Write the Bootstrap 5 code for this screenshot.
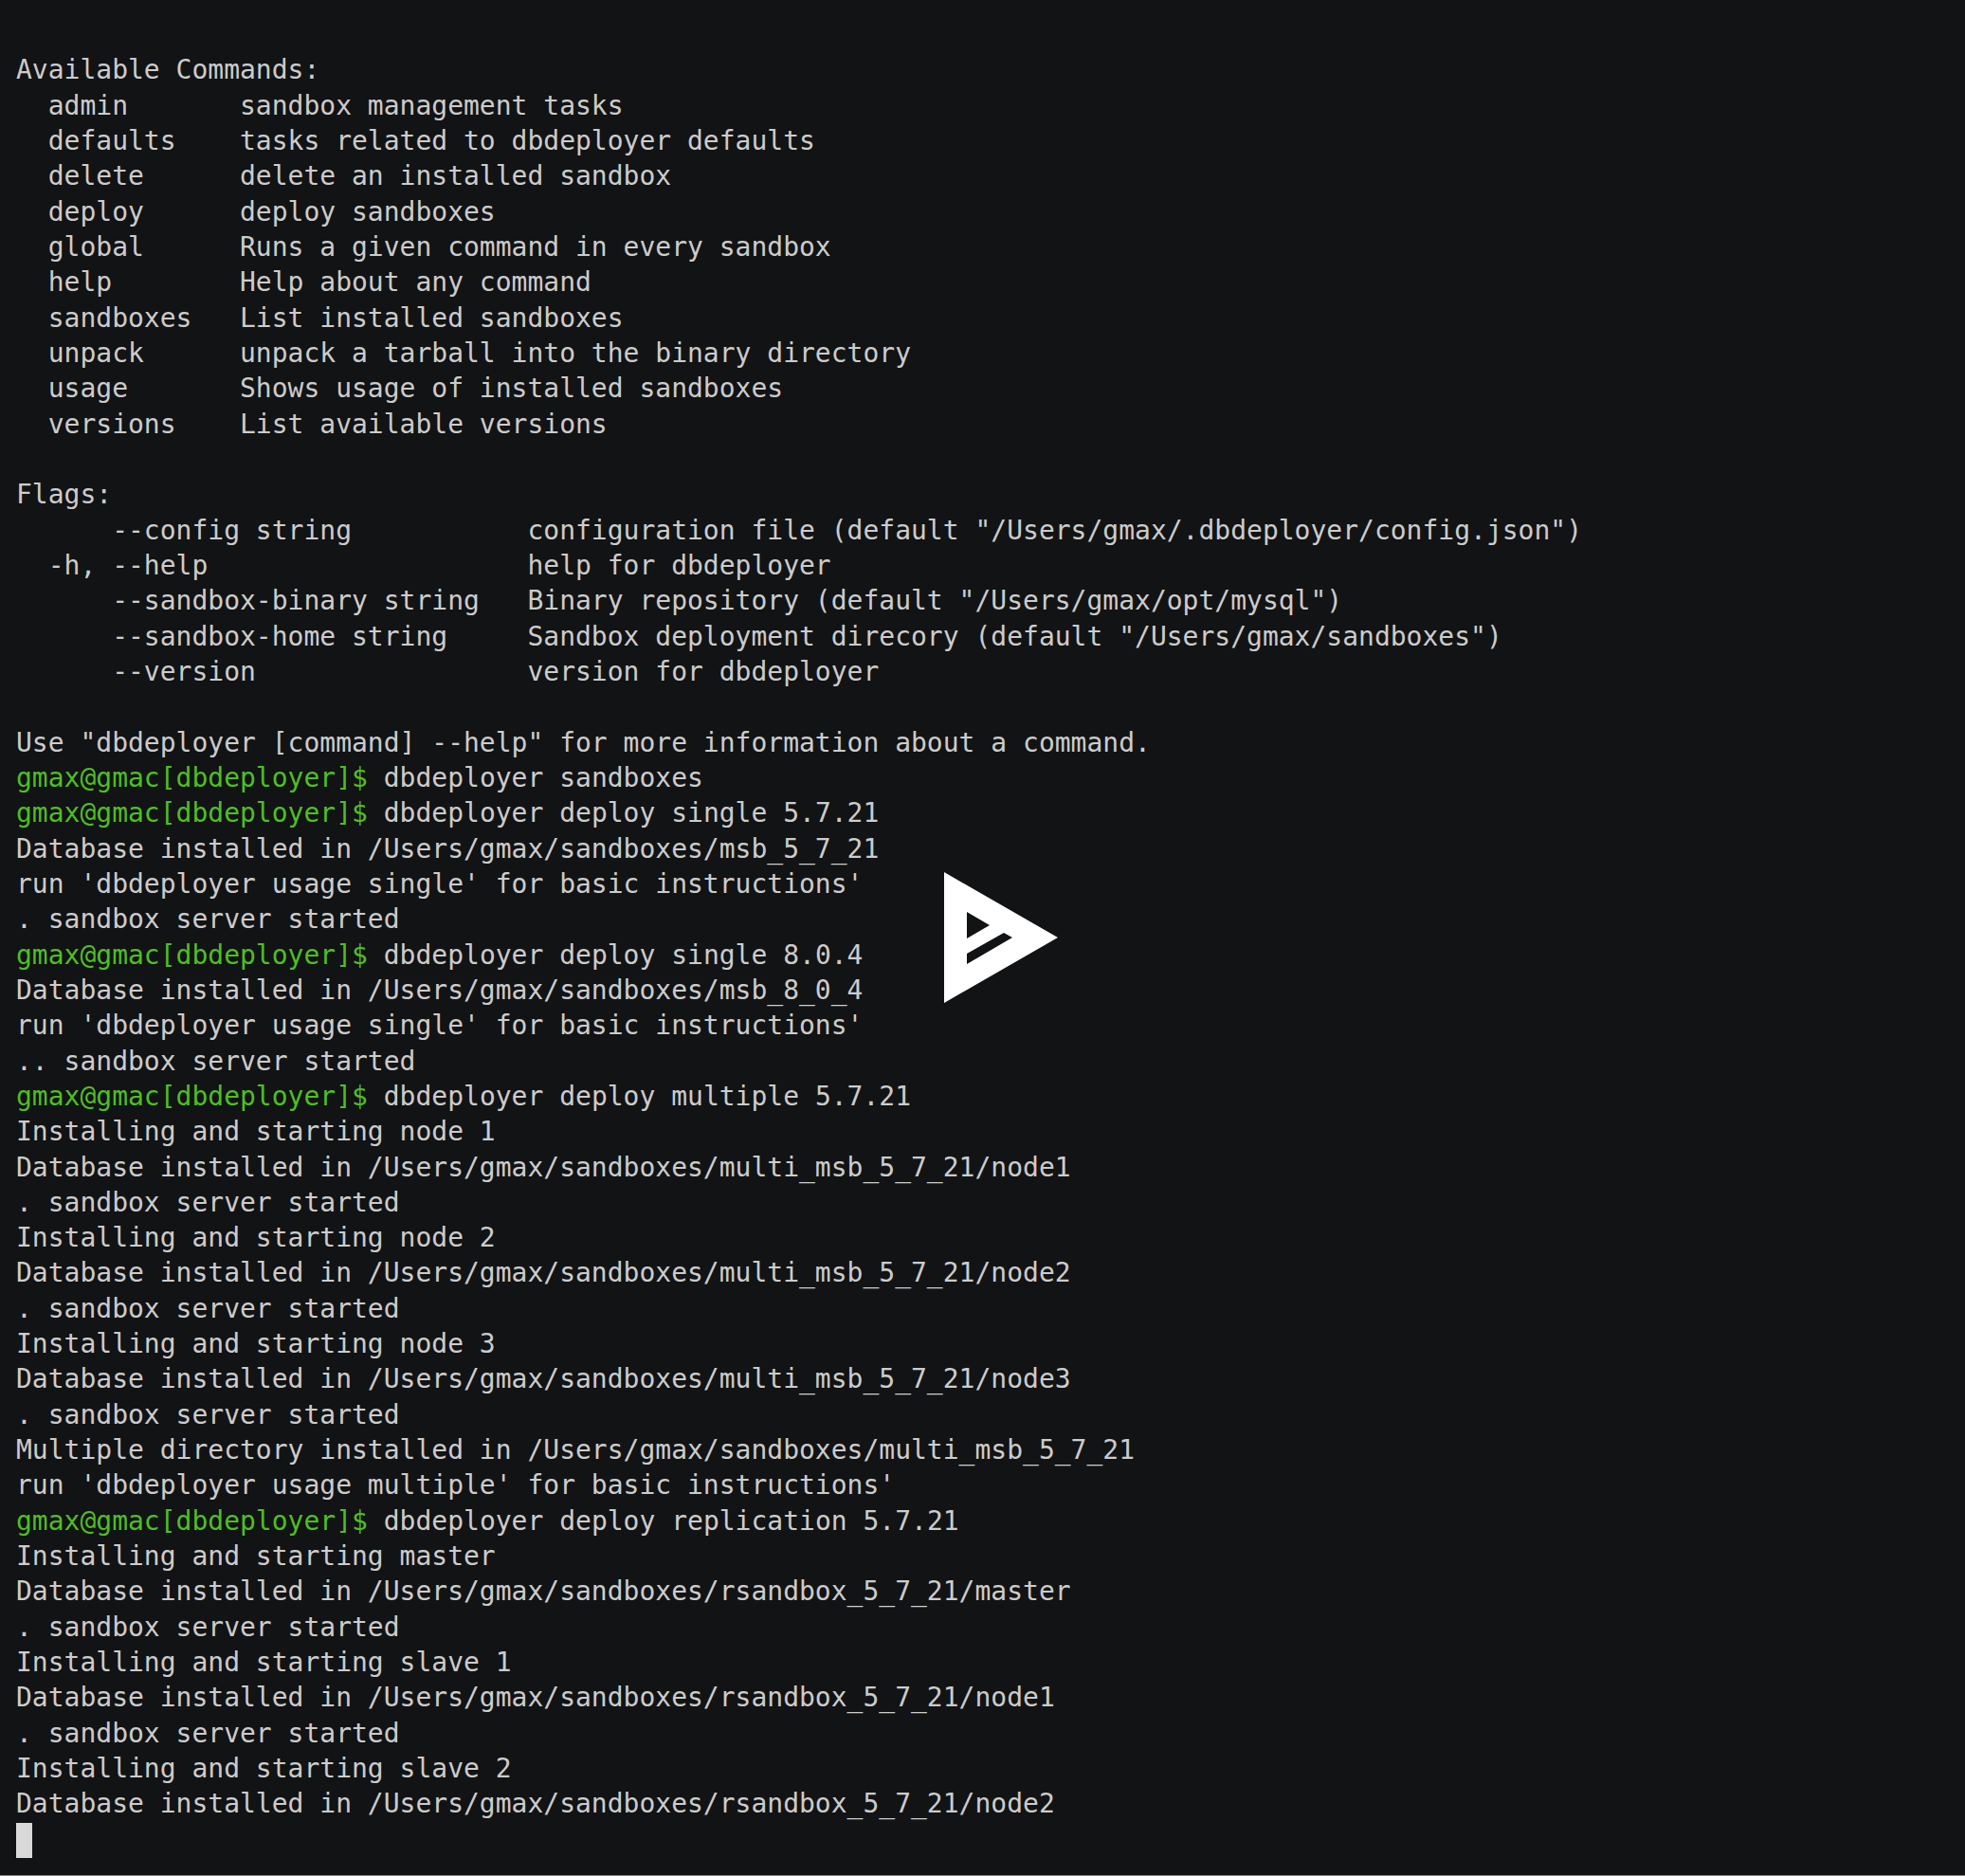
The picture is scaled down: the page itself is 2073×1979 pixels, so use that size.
<!DOCTYPE html>
<html lang="en">
<head>
<meta charset="utf-8">
<title>dbdeployer terminal recording</title>
<link href="https://cdn.jsdelivr.net/npm/bootstrap@5.3.0/dist/css/bootstrap.min.css" rel="stylesheet">
<style>
html, body { background: #888; margin: 0; min-height: 1979px; }
.term-shell { background: #121314; color: #ccc; width: 2073px; height: 1978px; padding: 18px 0 0 17px; }
.term-screen { font-family: "DejaVu Sans Mono", "Liberation Mono", monospace; font-size: 28px; line-height: 37.333px; margin: 0; overflow: visible; color: #ccc; }
.term-prompt { color: #4ebf22; }
.term-cursor { display: inline-block; width: 17px; height: 37px; margin-top: 1px; background: #d9d9d9; vertical-align: top; }
.play-mark { left: 996px; top: 920px; width: 120px; height: 138px; }
</style>
</head>
<body>
<div class="term-shell position-relative">
<pre class="term-screen">

Available Commands:
  admin       sandbox management tasks
  defaults    tasks related to dbdeployer defaults
  delete      delete an installed sandbox
  deploy      deploy sandboxes
  global      Runs a given command in every sandbox
  help        Help about any command
  sandboxes   List installed sandboxes
  unpack      unpack a tarball into the binary directory
  usage       Shows usage of installed sandboxes
  versions    List available versions

Flags:
      --config string           configuration file (default "/Users/gmax/.dbdeployer/config.json")
  -h, --help                    help for dbdeployer
      --sandbox-binary string   Binary repository (default "/Users/gmax/opt/mysql")
      --sandbox-home string     Sandbox deployment direcory (default "/Users/gmax/sandboxes")
      --version                 version for dbdeployer

Use "dbdeployer [command] --help" for more information about a command.
<span class="term-prompt">gmax@gmac[dbdeployer]$</span> dbdeployer sandboxes
<span class="term-prompt">gmax@gmac[dbdeployer]$</span> dbdeployer deploy single 5.7.21
Database installed in /Users/gmax/sandboxes/msb_5_7_21
run 'dbdeployer usage single' for basic instructions'
. sandbox server started
<span class="term-prompt">gmax@gmac[dbdeployer]$</span> dbdeployer deploy single 8.0.4
Database installed in /Users/gmax/sandboxes/msb_8_0_4
run 'dbdeployer usage single' for basic instructions'
.. sandbox server started
<span class="term-prompt">gmax@gmac[dbdeployer]$</span> dbdeployer deploy multiple 5.7.21
Installing and starting node 1
Database installed in /Users/gmax/sandboxes/multi_msb_5_7_21/node1
. sandbox server started
Installing and starting node 2
Database installed in /Users/gmax/sandboxes/multi_msb_5_7_21/node2
. sandbox server started
Installing and starting node 3
Database installed in /Users/gmax/sandboxes/multi_msb_5_7_21/node3
. sandbox server started
Multiple directory installed in /Users/gmax/sandboxes/multi_msb_5_7_21
run 'dbdeployer usage multiple' for basic instructions'
<span class="term-prompt">gmax@gmac[dbdeployer]$</span> dbdeployer deploy replication 5.7.21
Installing and starting master
Database installed in /Users/gmax/sandboxes/rsandbox_5_7_21/master
. sandbox server started
Installing and starting slave 1
Database installed in /Users/gmax/sandboxes/rsandbox_5_7_21/node1
. sandbox server started
Installing and starting slave 2
Database installed in /Users/gmax/sandboxes/rsandbox_5_7_21/node2
<span class="term-cursor"></span></pre>
<svg class="play-mark position-absolute" viewBox="996 920 120 138" aria-label="Play">
<path fill="#fff" fill-rule="evenodd" d="M996 920L1116 989L996 1058ZM1020 962V990L1044 976ZM1020 1006V1017L1068 989L1059 984Z"/>
</svg>
</div>
<script src="https://cdn.jsdelivr.net/npm/bootstrap@5.3.0/dist/js/bootstrap.bundle.min.js"></script>
</body>
</html>
